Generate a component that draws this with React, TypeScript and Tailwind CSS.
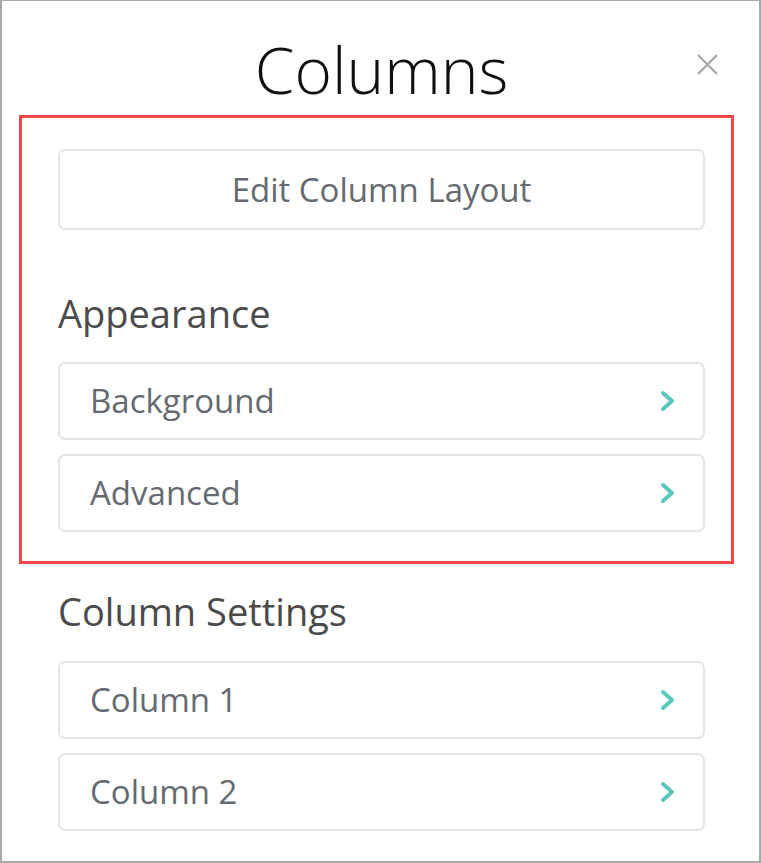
import React from "react";

function Chevron() {
  return (
    <svg width="15" height="22" viewBox="0 0 15 22" fill="none">
      <path d="M3 3 L12 11 L3 19" stroke="#5cc7bd" strokeWidth="4" strokeLinecap="round" strokeLinejoin="round" />
    </svg>
  );
}

function Row({ label }: { label: string }) {
  return (
    <div className="flex h-[78px] items-center justify-between rounded-[7px] border-2 border-[#e4e4e4] bg-white pl-[30px] pr-[28px]">
      <span className="text-[33px] text-[#646a6f]">{label}</span>
      <Chevron />
    </div>
  );
}

export default function App() {
  return (
    <div
      className="relative h-[863px] w-[761px] overflow-hidden border-x-2 border-t border-b-2 border-[#a9a9a9] bg-white"
      style={{ fontFamily: '"Open Sans", "Noto Sans", sans-serif' }}
    >
      <div className="ml-[56px] w-[647px]">
        <h1 className="mt-[25px] text-center text-[64px] font-light leading-[87px] text-[#0f0f0f]">Columns</h1>
        <button className="mt-[36px] flex h-[81px] w-full items-center justify-center rounded-[7px] border-2 border-[#e4e4e4] bg-white text-[33px] text-[#646a6f]">
          Edit Column Layout
        </button>
        <h2 className="mt-[57px] text-[38px] leading-[52px] text-[#4b4b4b]">Appearance</h2>
        <div className="mt-[23px] flex flex-col gap-[14px]">
          <Row label="Background" />
          <Row label="Advanced" />
        </div>
        <h2 className="mt-[53px] text-[38px] leading-[52px] text-[#4b4b4b]">Column Settings</h2>
        <div className="mt-[24px] flex flex-col gap-[14px]">
          <Row label="Column 1" />
          <Row label="Column 2" />
        </div>
      </div>

      <svg className="absolute left-[694px] top-[52px]" width="23" height="23" viewBox="0 0 23 23" fill="none">
        <path d="M2 2 L21 21 M21 2 L2 21" stroke="#9ea3a8" strokeWidth="2" />
      </svg>

      <div className="pointer-events-none absolute left-[17px] top-[114px] h-[449px] w-[715px] border-[3px] border-[#f44747]" />
    </div>
  );
}
